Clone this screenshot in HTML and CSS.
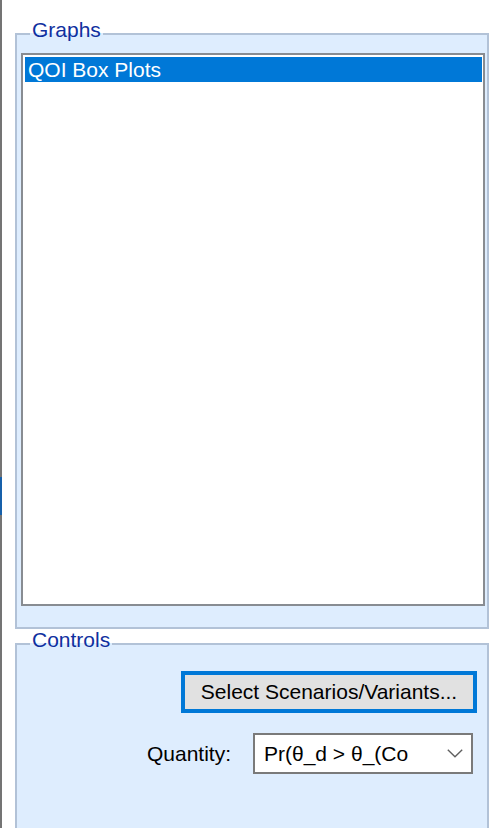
FILE: index.html
```html
<!DOCTYPE html>
<html lang="en">
<head>
<meta charset="utf-8">
<title>Graphs</title>
<link rel="stylesheet" href="styles.css">
</head>
<body>
<div class="window">
  <div class="edge"><div class="edge-mark"></div></div>
  <div class="panel">
    <fieldset class="group group-graphs">
      <legend>Graphs</legend>
      <div class="listbox">
        <div class="item selected">QOI Box Plots</div>
      </div>
    </fieldset>
    <fieldset class="group group-controls">
      <legend>Controls</legend>
      <div class="controls-body">
        <button class="btn" type="button">Select Scenarios/Variants...</button>
        <div class="row">
          <span class="label">Quantity:</span>
          <div class="combo">
            <span class="combo-text">Pr(θ_d &gt; θ_(Co</span>
            <svg class="chev" width="16" height="9" viewBox="0 0 16 9"><polyline points="0.8,0.8 8,7.8 15.2,0.8" fill="none" stroke="#606060" stroke-width="1.4"/></svg>
          </div>
        </div>
      </div>
    </fieldset>
  </div>
</div>
</body>
</html>
```
FILE: styles.css
```css
html, body {
  margin: 0;
  padding: 0;
  height: 828px;
  overflow: hidden;
  background: #ffffff;
}
body {
  font-family: "Liberation Sans", Arial, sans-serif;
  font-size: 21px;
  color: #000;
}
.window {
  display: flex;
  height: 828px;
}
.edge {
  flex: none;
  width: 2px;
  background: #747474;
  padding-top: 477px;
  box-sizing: border-box;
}
.edge-mark {
  height: 38px;
  background: #1660aa;
}
.panel {
  flex: 1;
  display: flex;
  flex-direction: column;
  padding: 0 3px 0 13px;
  min-width: 0;
}
.group {
  margin: 0;
  border: 2px solid #b2c2d7;
  background: #deedfe;
  min-width: 0;
}
.group legend {
  margin-left: 9px;
  padding: 0 2px 8px;
  line-height: 16px;
  color: #1030a0;
}
.group-graphs {
  margin-top: 22px;
  padding: 7px 2px 21px 4px;
}
.listbox {
  height: 553px;
  box-sizing: border-box;
  border: 2px solid #888c92;
  background: #fff;
  padding: 2px 1px 0 2px;
}
.item {
  height: 25px;
  line-height: 25px;
  padding-left: 3px;
}
.item.selected {
  background: #0078d7;
  color: #fff;
}
.group-controls {
  margin-top: 3px;
  padding: 15px 10px 0 4px;
  border-bottom: 0;
  height: 196px;
  box-sizing: border-box;
  flex: none;
}
.controls-body {
  display: flex;
  flex-direction: column;
  align-items: flex-end;
}
.btn {
  width: 296px;
  height: 42px;
  box-sizing: border-box;
  border: 4px solid #0078d7;
  background: #e1e1e1;
  font: inherit;
  line-height: 34px;
  padding: 0;
  color: #000;
}
.row {
  align-self: stretch;
  margin-top: 20px;
  display: flex;
  align-items: center;
  padding: 0 4px 0 126px;
}
.combo {
  margin-left: auto;
  width: 220px;
  height: 41px;
  box-sizing: border-box;
  border: 2px solid #7a7a7a;
  background: #fff;
  display: flex;
  align-items: center;
  padding-left: 9px;
  padding-right: 8px;
}
.combo-text {
  white-space: nowrap;
}
.chev {
  margin-left: auto;
  flex: none;
}
```
